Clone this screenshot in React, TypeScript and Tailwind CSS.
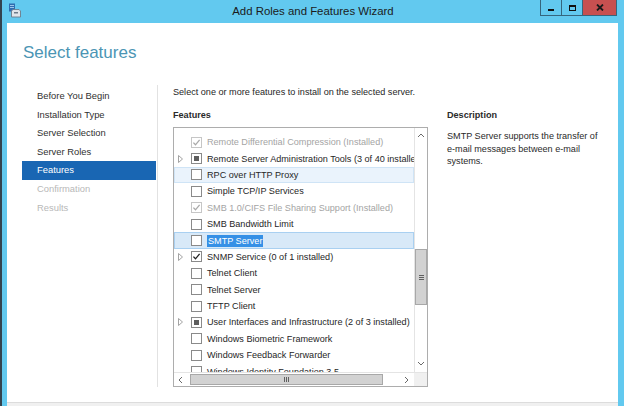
import clsx from "clsx";

type Row = {
  t: string;
  s?: "on" | "off" | "mixed";
  dim?: boolean;
  exp?: boolean;
  hover?: boolean;
  sel?: boolean;
};

const rows: Row[] = [
  { t: "Remote Differential Compression (Installed)", s: "on", dim: true },
  { t: "Remote Server Administration Tools (3 of 40 installed)", s: "mixed", exp: true },
  { t: "RPC over HTTP Proxy", hover: true },
  { t: "Simple TCP/IP Services" },
  { t: "SMB 1.0/CIFS File Sharing Support (Installed)", s: "on", dim: true },
  { t: "SMB Bandwidth Limit" },
  { t: "SMTP Server", sel: true },
  { t: "SNMP Service (0 of 1 installed)", s: "on", exp: true },
  { t: "Telnet Client" },
  { t: "Telnet Server" },
  { t: "TFTP Client" },
  { t: "User Interfaces and Infrastructure (2 of 3 installed)", s: "mixed", exp: true },
  { t: "Windows Biometric Framework" },
  { t: "Windows Feedback Forwarder" },
  { t: "Windows Identity Foundation 3.5" },
];

const steps = [
  { t: "Before You Begin" },
  { t: "Installation Type" },
  { t: "Server Selection" },
  { t: "Server Roles" },
  { t: "Features", active: true },
  { t: "Confirmation", off: true },
  { t: "Results", off: true },
];

function Checkbox({ state = "off", dim }: { state?: Row["s"]; dim?: boolean }) {
  return (
    <span
      className={clsx(
        "flex h-[11px] w-[11px] shrink-0 items-center justify-center border bg-white",
        dim ? "border-[#c6c6c6]" : "border-[#8a8a8a]"
      )}
    >
      {state === "on" && (
        <svg width="9" height="9" viewBox="0 0 9 9">
          <path
            d="M1.4 4.6 L3.5 6.8 L7.6 1.9"
            fill="none"
            stroke={dim ? "#a9a9a9" : "#222"}
            strokeWidth="1.3"
          />
        </svg>
      )}
      {state === "mixed" && <span className="h-[5px] w-[5px] bg-[#5e5e5e]" />}
    </span>
  );
}

function Expander() {
  return (
    <svg width="5" height="8" viewBox="0 0 5 8">
      <path d="M0.5 0.5 L4.5 4 L0.5 7.5 Z" fill="none" stroke="#9a9a9a" strokeWidth="0.9" />
    </svg>
  );
}

function Chevron({ dir }: { dir: "up" | "down" | "left" | "right" }) {
  const d = {
    up: "M1 5 L4 2 L7 5",
    down: "M1 2 L4 5 L7 2",
    left: "M5 1 L2 4 L5 7",
    right: "M2 1 L5 4 L2 7",
  }[dir];
  return (
    <svg width="8" height="8" viewBox="0 0 8 8">
      <path d={d} fill="none" stroke="#6a6a6a" strokeWidth="1" />
    </svg>
  );
}

function WindowIcon() {
  return (
    <svg width="14" height="15" viewBox="0 0 14 15">
      <rect x="1" y="0.5" width="6" height="8" fill="#2f6db0" />
      <rect x="2" y="2" width="4" height="1" fill="#9cc6ec" />
      <rect x="2" y="4" width="4" height="1" fill="#9cc6ec" />
      <path d="M3.5 8 L5 6.5 H11 L12.5 8 V14 H3.5 Z" fill="#dfe5ea" stroke="#6c7c8a" strokeWidth="0.9" />
      <rect x="6" y="9" width="4" height="1.5" fill="#6c7c8a" />
    </svg>
  );
}

export default function App() {
  return (
    <div className="flex h-[406px] w-[624px] flex-col overflow-hidden border-l-2 border-[#33434f] bg-[#62c9ef] font-['Liberation_Sans',Arial,sans-serif] text-[#262626]">
      {/* title bar */}
      <div className="grid h-[23px] shrink-0 grid-cols-[1fr_auto_1fr] items-start">
        <div className="pl-[6px] pt-[3px]">
          <WindowIcon />
        </div>
        <div className="pt-[4px] text-[11.4px] leading-[14px] text-[#1b1b1b]">
          Add Roles and Features Wizard
        </div>
        <div className="flex justify-end pr-[7px]">
          <div className="flex h-[16px] border border-t-0 border-[#35667e]">
            <div className="flex w-[21px] items-end justify-center border-r border-[#35667e] pb-[4px]">
              <span className="h-[2px] w-[6px] bg-[#111]" />
            </div>
            <div className="flex w-[21px] items-center justify-center border-r border-[#35667e]">
              <span className="h-[6px] w-[7px] border border-t-2 border-[#111]" />
            </div>
            <div className="flex w-[33px] items-center justify-center bg-[#c75050]">
              <svg width="8" height="7" viewBox="0 0 8 7">
                <path d="M1 0.5 L7 6.5 M7 0.5 L1 6.5" stroke="#1a1a1a" strokeWidth="1.8" />
              </svg>
            </div>
          </div>
        </div>
      </div>

      {/* window body */}
      <div className="ml-[5px] mr-[6px] flex h-[379px] shrink-0 flex-col bg-white">
        <div className="pl-[16px] pt-[19px] text-[17px] font-light leading-[22px] text-[#4b95b4]">
          Select features
        </div>

        <div className="mt-[21px] flex h-[302px]">
          {/* steps */}
          <div className="w-[151px] shrink-0 border-r border-[#e2e2e2] pl-[15px] pr-[1px] pt-[2px]">
            {steps.map((s) => (
              <div
                key={s.t}
                className={clsx(
                  "h-[18.6px] pl-[15px] text-[9.4px] leading-[18.6px]",
                  s.active && "bg-[#1966b3] text-white",
                  s.off && "text-[#b8b8b8]",
                  !s.active && !s.off && "text-[#303030]"
                )}
              >
                {s.t}
              </div>
            ))}
          </div>

          {/* content */}
          <div className="flex pl-[15px]">
            <div className="w-[255px]">
              <div className="h-[14px] whitespace-nowrap text-[9.1px] leading-[14px]">
                Select one or more features to install on the selected server.
              </div>
              <div className="mt-[9px] text-[9.1px] font-bold leading-[14px] text-[#2a2a2a]">
                Features
              </div>

              {/* list box */}
              <div className="mt-[5px] flex h-[260px] flex-col border border-[#adadad]">
                <div className="flex h-[244px]">
                  <div className="flex-1 overflow-hidden pt-[6px]">
                    {rows.map((r) => (
                      <div
                        key={r.t}
                        className={clsx(
                          "box-border flex h-[16.4px] items-center whitespace-nowrap text-[9.1px]",
                          r.hover && "border border-[#cfe4f6] bg-[#eaf3fc]",
                          r.sel && "border border-[#a9d0f1] bg-[#d8e9f8]",
                          !r.hover && !r.sel && "border border-transparent"
                        )}
                      >
                        <span className="flex w-[16px] shrink-0 pl-[3px]">{r.exp && <Expander />}</span>
                        <Checkbox state={r.s} dim={r.dim} />
                        <span
                          className={clsx(
                            "ml-[5px] leading-[12px]",
                            r.dim && "text-[#a4a4a4]",
                            r.sel && "bg-[#3590e6] px-[1px] text-white"
                          )}
                        >
                          {r.t}
                        </span>
                      </div>
                    ))}
                  </div>
                  {/* vertical scrollbar */}
                  <div className="flex w-[13px] flex-col border-l border-[#e4e4e4]">
                    <div className="flex h-[16px] items-center justify-center">
                      <Chevron dir="up" />
                    </div>
                    <div className="flex-1 pt-[105px]">
                      <div className="flex h-[56px] items-center justify-center border border-[#a8a8a8] bg-[#d2d2d2]">
                        <svg width="5" height="5" viewBox="0 0 5 5">
                          <path d="M0 0.5 H5 M0 2.5 H5 M0 4.5 H5" stroke="#606060" strokeWidth="1" />
                        </svg>
                      </div>
                    </div>
                    <div className="flex h-[16px] items-center justify-center">
                      <Chevron dir="down" />
                    </div>
                  </div>
                </div>
                {/* horizontal scrollbar */}
                <div className="flex h-[14px] border-t border-[#e4e4e4]">
                  <div className="flex w-[14px] items-center justify-center">
                    <Chevron dir="left" />
                  </div>
                  <div className="flex flex-1 items-center pl-[2px] pr-[17px]">
                    <div className="flex h-[11px] flex-1 items-center justify-center border border-[#a8a8a8] bg-[#d2d2d2]">
                      <svg width="5" height="5" viewBox="0 0 5 5">
                        <path d="M0.5 0 V5 M2.5 0 V5 M4.5 0 V5" stroke="#606060" strokeWidth="1" />
                      </svg>
                    </div>
                  </div>
                  <div className="flex w-[14px] items-center justify-center">
                    <Chevron dir="right" />
                  </div>
                  <div className="w-[13px] bg-[#f0f0f0]" />
                </div>
              </div>
            </div>

            {/* description */}
            <div className="ml-[19px] pt-[23px]">
              <div className="text-[9.1px] font-bold leading-[14px] text-[#2a2a2a]">Description</div>
              <div className="mt-[8px] text-[9.1px] leading-[12.5px] text-[#2a2a2a]">
                <div>SMTP Server supports the transfer of</div>
                <div>e-mail messages between e-mail</div>
                <div>systems.</div>
              </div>
            </div>
          </div>
        </div>
      </div>

      {/* footer strip */}
      <div className="ml-[5px] mr-[6px] h-[4px] border-t border-[#dcdcdc] bg-[#f0f0f0]" />
    </div>
  );
}
